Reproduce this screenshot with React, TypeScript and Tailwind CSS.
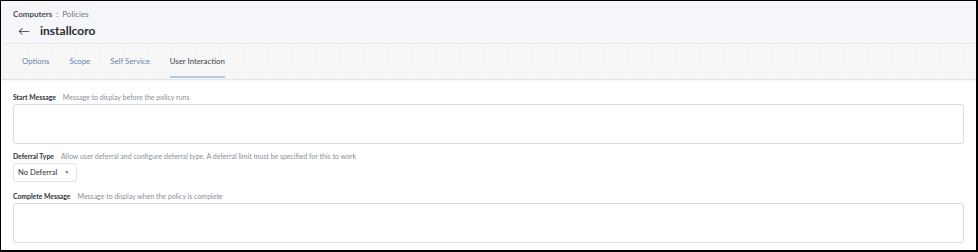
import React from "react";

function Label({ title, desc }: { title: string; desc: string }) {
  return (
    <div className="flex items-baseline gap-[7px] h-[10px] leading-[10px] shrink-0">
      <span className="text-[6.8px] font-bold text-[#2f3337]">{title}</span>
      <span className="text-[7px] text-[#8a8f96]">{desc}</span>
    </div>
  );
}

export default function App() {
  return (
    <div
      className="w-[978px] h-[252px] bg-white border-t border-l border-r-2 border-b-2 border-black overflow-hidden flex flex-col"
      style={{ fontFamily: "Lato, 'Liberation Sans', sans-serif" }}
    >
      <div className="h-[43px] shrink-0 bg-[#f5f6fa] border-b border-[#e6e8ee] pl-[12px] pt-[8px] flex flex-col">
        <div className="text-[8px] leading-[10px] text-[#73777e]">
          <span className="font-bold text-[#4a4f57]">Computers</span>
          <span className="mx-[4px]">:</span>
          <span>Policies</span>
        </div>
        <div className="flex items-center mt-[5px] h-[14px]">
          <span className="text-[12px] text-[#3a3f46] ml-[5px] leading-[14px]">←</span>
          <span className="text-[12px] font-bold text-[#2a2e33] ml-[10px] leading-[14px]">installcoro</span>
        </div>
      </div>
      <div
        className="h-[36px] shrink-0 bg-[#f7f7f8] border-b border-[#e4e5e8] flex items-stretch pl-[21px] gap-[20px] shadow-[0_1px_2px_rgba(0,0,0,0.04)]"
        style={{
          backgroundImage:
            "radial-gradient(rgba(0,0,0,0.025) 0.6px, transparent 0.7px)",
          backgroundSize: "3px 3px",
        }}
      >
        {["Options", "Scope", "Self Service", "User Interaction"].map((t, i) => (
          <div
            key={t}
            className={
              "flex items-center text-[7.8px] relative " +
              (i === 3 ? "text-[#3d4249]" : "text-[#6a85ad]")
            }
          >
            {t}
            {i === 3 && (
              <div className="absolute left-0 right-0 bottom-[1px] h-[2px] bg-[#b7c7e0]" />
            )}
          </div>
        ))}
      </div>
      <div className="pl-[12px] pr-[12px] pt-[12px] flex flex-col">
        <Label title="Start Message" desc="Message to display before the policy runs" />
        <div className="mt-[2px] h-[40px] shrink-0 w-[951px] border border-[#dcdcdc] rounded-[3px] bg-white" />
        <div className="mt-[7px] shrink-0">
          <Label
            title="Deferral Type"
            desc="Allow user deferral and configure deferral type. A deferral limit must be specified for this to work"
          />
        </div>
        <div className="mt-[2px] h-[19px] shrink-0 w-[64px] border border-[#e3e3e3] rounded-[3px] flex items-center pl-[4px] text-[7.6px] text-[#2f3337]">
          No Deferral
          <span className="ml-[7px] text-[5px] text-[#5a6b85]">▼</span>
        </div>
        <div className="mt-[9px] shrink-0">
          <Label title="Complete Message" desc="Message to display when the policy is complete" />
        </div>
        <div className="mt-[2px] h-[40px] shrink-0 w-[951px] border border-[#dcdcdc] rounded-[3px] bg-white" />
      </div>
    </div>
  );
}
